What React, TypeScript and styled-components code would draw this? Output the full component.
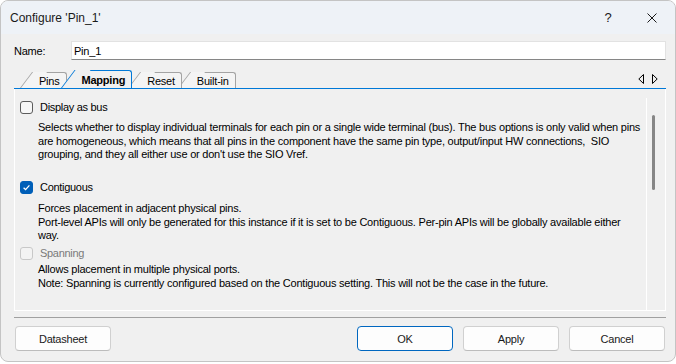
import React from 'react';
import styled, { createGlobalStyle } from 'styled-components';

const GlobalStyle = createGlobalStyle`
  html, body {
    margin: 0;
    padding: 0;
    background: #ffffff;
  }
  body {
    font-family: "Liberation Sans", Arial, sans-serif;
  }
  * {
    box-sizing: border-box;
  }
`;

const BLUE = '#0078d7';

const Window = styled.div`
  width: 676px;
  height: 362px;
  background: #f0f0f0;
  border: 1px solid #c4c4c4;
  border-radius: 8px;
  overflow: hidden;
  display: flex;
  flex-direction: column;
  color: #000;
  font-size: 11px;
  letter-spacing: -0.22px;
`;

const TitleBar = styled.div`
  height: 33px;
  flex-shrink: 0;
  background: #eef2f7;
  display: flex;
  align-items: center;
  padding-left: 9px;
`;

const Title = styled.div`
  flex: 1;
  font-size: 12px;
  letter-spacing: 0;
  color: #1a1a1a;
`;

const CaptionButton = styled.div<{ $w: number }>`
  width: ${p => p.$w}px;
  height: 100%;
  display: flex;
  align-items: center;
  justify-content: center;
  font-size: 13px;
  letter-spacing: 0;
  color: #1a1a1a;
`;

const Body = styled.div`
  flex: 1;
  display: flex;
  flex-direction: column;
  padding: 7px 9px 10px 13px;
`;

const NameRow = styled.div`
  display: flex;
  align-items: center;
  height: 19px;
`;

const NameLabel = styled.span`
  width: 57px;
`;

const NameInput = styled.div`
  flex: 1;
  height: 19px;
  background: #ffffff;
  border: 1px solid #e2e2e2;
  border-bottom-color: #868686;
  padding-left: 2px;
  display: flex;
  align-items: center;
`;

const TabStrip = styled.div`
  margin-top: 9px;
  height: 20px;
  flex-shrink: 0;
  border-bottom: 1px solid ${BLUE};
  display: flex;
  align-items: flex-end;
  padding-left: 18px;
`;

const Tab = styled.div<{ $active?: boolean; $layer: number; $first?: boolean }>`
  position: relative;
  z-index: ${p => (p.$active ? 10 : p.$layer)};
  height: ${p => (p.$active ? 18 : 16)}px;
  margin-left: ${p => (p.$first ? 0 : 8)}px;
  padding: 0 6px 0 7px;
  display: flex;
  align-items: center;
  background: ${p => (p.$active ? '#f0f0f0' : '#f4f4f4')};
  border-top: 1px solid ${p => (p.$active ? BLUE : '#a3a3a3')};
  border-right: 1px solid ${p => (p.$active ? BLUE : '#a3a3a3')};
  border-top-right-radius: 3px;
  font-weight: ${p => (p.$active ? 700 : 400)};

  &::before {
    content: '';
    position: absolute;
    z-index: -1;
    top: -1px;
    bottom: 0;
    left: ${p => -(p.$active ? 13.6 : 12.1)}px;
    width: ${p => (p.$active ? 15 : 14)}px;
    background: inherit;
    border-left: 1px solid ${p => (p.$active ? BLUE : '#a3a3a3')};
    transform-origin: bottom left;
    transform: skewX(-37deg);
  }
`;

const TabArrows = styled.div`
  margin-left: auto;
  margin-right: 8px;
  align-self: center;
  display: flex;
  gap: 8px;
`;

const Page = styled.div`
  height: 222px;
  flex-shrink: 0;
  border: 1px solid #ffffff;
  border-top: none;
  padding-top: 9px;
  display: flex;
`;

const Scroller = styled.div`
  flex: 1;
  display: flex;
  flex-direction: column;
`;

const ScrollTrack = styled.div`
  width: 19px;
  border-left: 1px solid #ffffff;
  padding-left: 5px;
`;

const Thumb = styled.div`
  margin-top: 17px;
  width: 3px;
  height: 75px;
  background: #868686;
  border-radius: 2px;
`;

const OptionRow = styled.div<{ $gap: number }>`
  margin-top: ${p => p.$gap}px;
  height: 16px;
  display: flex;
  align-items: center;
  padding-left: 5px;
`;

const Box = styled.span<{ $checked?: boolean; $disabled?: boolean }>`
  width: 13px;
  height: 13px;
  border-radius: 3px;
  border: 1px solid ${p => (p.$checked ? '#005fb8' : p.$disabled ? '#c8c8c8' : '#5c5c5c')};
  background: ${p => (p.$checked ? '#005fb8' : p.$disabled ? '#f3f3f3' : '#f7f7f7')};
  display: flex;
  align-items: center;
  justify-content: center;
`;

const OptionLabel = styled.span<{ $disabled?: boolean }>`
  margin-left: 7px;
  letter-spacing: -0.3px;
  color: ${p => (p.$disabled ? '#7a7a7a' : '#000')};
`;

const Desc = styled.div<{ $gap: number }>`
  margin-top: ${p => p.$gap}px;
  padding-left: 23px;
  line-height: 13.5px;
  white-space: pre;
`;

const Separator = styled.div`
  margin-top: 6px;
  height: 1px;
  flex-shrink: 0;
  background: #a0a0a0;
`;

const Footer = styled.div`
  margin-top: 8px;
  display: flex;
  gap: 10px;
  padding: 0 1px;
`;

const Button = styled.div<{ $default?: boolean }>`
  width: 96px;
  height: 25px;
  display: flex;
  align-items: center;
  justify-content: center;
  background: #fdfdfd;
  border: 1px solid ${p => (p.$default ? '#0067c0' : '#d0d0d0')};
  border-bottom-color: ${p => (p.$default ? '#0067c0' : '#bcbcbc')};
  border-radius: 4px;
  color: #1a1a1a;
`;

const Spacer = styled.div`
  flex: 1;
`;

const Check = () => (
  <svg width="9" height="9" viewBox="0 0 9 9">
    <path d="M1.6 4.7 L3.6 6.6 L7.4 2.4" fill="none" stroke="#ffffff" strokeWidth="1.3" />
  </svg>
);

const Arrow = ({ dir }: { dir: 'left' | 'right' }) => (
  <svg width="6" height="10" viewBox="0 0 6 10">
    {dir === 'left' ? (
      <path d="M5.5 0.5 L5.5 9.5 L0.8 5 Z" fill="none" stroke="#000" strokeWidth="1" />
    ) : (
      <path d="M0.5 0.5 L0.5 9.5 L5.2 5 Z" fill="none" stroke="#000" strokeWidth="1" />
    )}
  </svg>
);

type OptionProps = {
  label: string
  checked?: boolean
  disabled?: boolean
  rowGap: number
  descGap: number
  lines: string[]
}

const Option = ({ label, checked, disabled, rowGap, descGap, lines }: OptionProps) => (
  <>
    <OptionRow $gap={rowGap}>
      <Box $checked={checked} $disabled={disabled}>{checked && <Check />}</Box>
      <OptionLabel $disabled={disabled}>{label}</OptionLabel>
    </OptionRow>
    <Desc $gap={descGap}>
      {lines.map((l, i) => (
        <div key={i}>{l}</div>
      ))}
    </Desc>
  </>
);

const tabs = ['Pins', 'Mapping', 'Reset', 'Built-in'];

export default function App() {
  return (
    <>
      <GlobalStyle />
      <Window>
        <TitleBar>
          <Title>Configure 'Pin_1'</Title>
          <CaptionButton $w={42}>?</CaptionButton>
          <CaptionButton $w={46}>
            <svg width="10" height="10" viewBox="0 0 10 10">
              <path d="M0.5 0.5 L9.5 9.5 M9.5 0.5 L0.5 9.5" stroke="#1a1a1a" strokeWidth="1" />
            </svg>
          </CaptionButton>
        </TitleBar>
        <Body>
          <NameRow>
            <NameLabel>Name:</NameLabel>
            <NameInput>Pin_1</NameInput>
          </NameRow>
          <TabStrip>
            {tabs.map((t, i) => (
              <Tab key={t} $first={i === 0} $active={t === 'Mapping'} $layer={tabs.length - i}>
                {t}
              </Tab>
            ))}
            <TabArrows>
              <Arrow dir="left" />
              <Arrow dir="right" />
            </TabArrows>
          </TabStrip>
          <Page>
            <Scroller>
              <Option
                label="Display as bus"
                rowGap={1}
                descGap={6}
                lines={[
                  'Selects whether to display individual terminals for each pin or a single wide terminal (bus). The bus options is only valid when pins',
                  'are homogeneous, which means that all pins in the component have the same pin type, output/input HW connections,  SIO',
                  "grouping, and they all either use or don't use the SIO Vref.",
                ]}
              />
              <Option
                label="Contiguous"
                checked
                rowGap={17.5}
                descGap={7.25}
                lines={[
                  'Forces placement in adjacent physical pins.',
                  'Port-level APIs will only be generated for this instance if it is set to be Contiguous. Per-pin APIs will be globally available either',
                  'way.',
                ]}
              />
              <Option
                label="Spanning"
                disabled
                rowGap={2.25}
                descGap={2.25}
                lines={[
                  'Allows placement in multiple physical ports.',
                  'Note: Spanning is currently configured based on the Contiguous setting. This will not be the case in the future.',
                ]}
              />
            </Scroller>
            <ScrollTrack>
              <Thumb />
            </ScrollTrack>
          </Page>
          <Separator />
          <Footer>
            <Button>Datasheet</Button>
            <Spacer />
            <Button $default>OK</Button>
            <Button>Apply</Button>
            <Button>Cancel</Button>
          </Footer>
        </Body>
      </Window>
    </>
  );
}
